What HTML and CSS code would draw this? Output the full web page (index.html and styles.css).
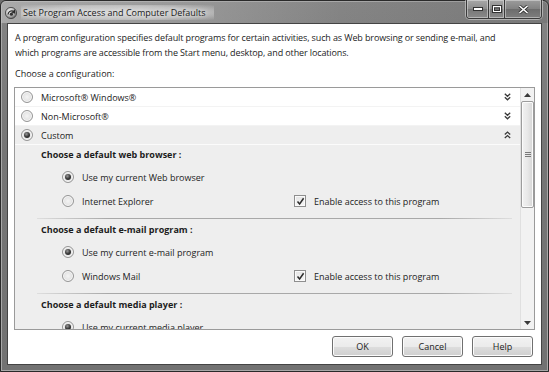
FILE: index.html
```html
<!DOCTYPE html>
<html>
<head>
<meta charset="utf-8">
<link rel="stylesheet" href="styles.css">
</head>
<body>
<div class="window">
  <div class="titlebar">
    <svg class="appicon" width="12" height="12" viewBox="0 0 12 12">
      <defs>
        <radialGradient id="ig" cx="0.4" cy="0.35" r="0.7">
          <stop offset="0" stop-color="#f4f4f4"/>
          <stop offset="0.6" stop-color="#b4b4b4"/>
          <stop offset="1" stop-color="#5a5a5a"/>
        </radialGradient>
      </defs>
      <circle cx="6" cy="6" r="5.6" fill="url(#ig)" stroke="#3c3c3c" stroke-width="0.8"/>
      <path d="M3 7.5 C3.5 4.5 6 3.2 8.8 4.2 L7.6 5.2 L9.6 5.8 L9.4 3.6 L8.9 4.1" fill="none" stroke="#2a2a2a" stroke-width="1.2"/>
      <circle cx="6.4" cy="7.2" r="1.6" fill="#333"/>
    </svg>
    <span class="title">Set Program Access and Computer Defaults</span>
    <div class="caption">
      <div class="cbtn cmin"><svg width="10" height="4" viewBox="0 0 10 4"><rect x="0.5" y="0.5" width="9" height="3" fill="#fff" stroke="#333"/></svg></div>
      <div class="cbtn cmax"><svg width="10" height="8" viewBox="0 0 10 8"><rect x="0.5" y="0.5" width="9" height="7" fill="none" stroke="#333"/><rect x="1.5" y="1.5" width="7" height="5" fill="none" stroke="#fff"/><rect x="2.5" y="3" width="5" height="2.5" fill="none" stroke="#333"/></svg></div>
      <div class="cbtn cclose"><svg width="11" height="9" viewBox="0 0 11 9"><path d="M1.5 1 L9.5 8 M9.5 1 L1.5 8" stroke="#333" stroke-width="3.2"/><path d="M1.5 1 L9.5 8 M9.5 1 L1.5 8" stroke="#fff" stroke-width="1.6"/></svg></div>
    </div>
  </div>
  <div class="client">
    <p class="intro">A program configuration specifies default programs for certain activities, such as Web browsing or sending e-mail, and<br>which programs are accessible from the Start menu, desktop, and other locations.</p>
    <p class="choose">Choose a configuration:</p>
    <div class="listbox">
      <div class="listcontent">
        <div class="row">
          <span class="radio"></span><span class="rlabel">Microsoft® Windows®</span>
          <svg class="chev" width="7" height="8" viewBox="0 0 7 8"><path d="M0.8 0.8 L3.5 3.3 L6.2 0.8 M0.8 4.3 L3.5 6.8 L6.2 4.3" fill="none" stroke="#3a3a3a" stroke-width="1.3"/></svg>
        </div>
        <div class="row">
          <span class="radio"></span><span class="rlabel">Non-Microsoft®</span>
          <svg class="chev" width="7" height="8" viewBox="0 0 7 8"><path d="M0.8 0.8 L3.5 3.3 L6.2 0.8 M0.8 4.3 L3.5 6.8 L6.2 4.3" fill="none" stroke="#3a3a3a" stroke-width="1.3"/></svg>
        </div>
        <div class="row selected">
          <span class="radio on"></span><span class="rlabel">Custom</span>
          <svg class="chev" width="7" height="8" viewBox="0 0 7 8"><path d="M0.8 3.6 L3.5 1.1 L6.2 3.6 M0.8 7.1 L3.5 4.6 L6.2 7.1" fill="none" stroke="#3a3a3a" stroke-width="1.3"/></svg>
        </div>
        <div class="details">
          <div class="ghead">Choose a default web browser :</div>
          <div class="opt"><span class="radio on"></span><span class="olabel">Use my current Web browser</span></div>
          <div class="opt"><span class="radio"></span><span class="olabel">Internet Explorer</span><span class="check"><svg width="9" height="9" viewBox="0 0 9 9"><path d="M1.5 4.5 L3.6 7 L7.6 1.2" fill="none" stroke="#2c2c2c" stroke-width="1.5"/></svg></span><span class="clabel">Enable access to this program</span></div>
          <div class="sep"></div>
          <div class="ghead">Choose a default e-mail program :</div>
          <div class="opt"><span class="radio on"></span><span class="olabel">Use my current e-mail program</span></div>
          <div class="opt"><span class="radio"></span><span class="olabel">Windows Mail</span><span class="check"><svg width="9" height="9" viewBox="0 0 9 9"><path d="M1.5 4.5 L3.6 7 L7.6 1.2" fill="none" stroke="#2c2c2c" stroke-width="1.5"/></svg></span><span class="clabel">Enable access to this program</span></div>
          <div class="sep"></div>
          <div class="ghead">Choose a default media player :</div>
          <div class="opt"><span class="radio on"></span><span class="olabel">Use my current media player</span></div>
        </div>
      </div>
      <div class="scrollbar">
        <div class="sbarrow"><svg width="7" height="4" viewBox="0 0 7 4"><path d="M0 4 L3.5 0 L7 4 Z" fill="#3a3a3a"/></svg></div>
        <div class="thumb"><span class="grip"></span><span class="grip"></span><span class="grip"></span></div>
        <div class="sbtrack"></div>
        <div class="sbarrow"><svg width="7" height="4" viewBox="0 0 7 4"><path d="M0 0 L3.5 4 L7 0 Z" fill="#3a3a3a"/></svg></div>
      </div>
    </div>
    <div class="buttons">
      <button class="btn">OK</button>
      <button class="btn">Cancel</button>
      <button class="btn">Help</button>
    </div>
  </div>
</div>
</body>
</html>
```

FILE: styles.css
```css
* { box-sizing: border-box; }
html, body {
  margin: 0;
  padding: 0;
  width: 549px;
  height: 372px;
  overflow: hidden;
  background: #6e6e6e;
}
body {
  font-family: "Open Sans", "Noto Sans", sans-serif;
  font-size: 9px;
  color: #1c1c1c;
}
.window {
  width: 549px;
  height: 372px;
  border: 1px solid #2a2a2a;
  border-radius: 6px 6px 0 0;
  background: linear-gradient(180deg, #858585 0%, #767676 40%, #727272 100%);
  padding: 0 6px 6px 6px;
  display: flex;
  flex-direction: column;
  box-shadow: inset 0 0 0 1px #a8a8a8;
}
.titlebar {
  height: 22px;
  display: flex;
  align-items: center;
  position: relative;
  margin: 0 -6px;
  padding-left: 4px;
  background: linear-gradient(90deg, rgba(200,200,200,0.55) 0%, rgba(175,175,175,0.4) 38%, rgba(120,120,120,0) 62%, rgba(80,80,80,0.2) 100%);
  border-radius: 5px 5px 0 0;
}
.appicon { flex: none; margin-top: 1px; }
.title {
  margin-left: 4px;
  font-size: 9px;
  color: #1a1a1a;
  padding: 1px 8px 1px 2px;
  background: radial-gradient(ellipse at center, rgba(230,230,230,0.8) 0%, rgba(220,220,220,0.6) 60%, rgba(200,200,200,0) 100%);
  text-shadow: 0 0 4px #fff;
}
.caption {
  position: absolute;
  top: -1px;
  right: 6px;
  display: flex;
  height: 19px;
  border: 1px solid #3a3a3a;
  border-top: none;
  border-radius: 0 0 4px 4px;
  overflow: hidden;
  box-shadow: 0 0 0 1px rgba(220,220,220,0.55);
}
.cbtn {
  height: 18px;
  display: flex;
  align-items: center;
  justify-content: center;
  background: linear-gradient(180deg, #a8a8a8 0%, #8c8c8c 50%, #777 51%, #8a8a8a 100%);
  box-shadow: inset 0 0 0 1px rgba(230,230,230,0.5);
}
.cmin { width: 22px; border-right: 1px solid #3a3a3a; }
.cmax { width: 16px; border-right: 1px solid #3a3a3a; }
.cclose { width: 36px; background: linear-gradient(180deg, #9c9c9c 0%, #828282 50%, #6c6c6c 51%, #7e7e7e 100%); }
.client {
  flex: 1;
  background: #fff;
  border: 1px solid #444;
  padding: 6px 6px 0 6px;
  display: flex;
  flex-direction: column;
}
.intro, .choose {
  margin: 0 0 0 1px;
  line-height: 15px;
}
.intro { letter-spacing: -0.12px; }
.choose { margin-top: 6px; }
.listbox {
  margin-top: 6px;
  height: 243px;
  border: 1px solid #9a9a9a;
  display: flex;
  overflow: hidden;
}
.listcontent {
  flex: 1;
  overflow: hidden;
}
.row {
  height: 19px;
  display: flex;
  align-items: center;
  padding-left: 6px;
  padding-right: 9px;
  border-bottom: 1px solid #f3f3f3;
}
.row.selected {
  background: #eeeeee;
  border-bottom: 1px solid #fbfbfb;
}
.rlabel { margin-left: 8px; flex: 1; }
.chev { flex: none; }
.radio {
  flex: none;
  width: 12px;
  height: 12px;
  border-radius: 50%;
  border: 1px solid #969696;
  background: radial-gradient(circle at 50% 50%, #f4f4f4 0%, #e4e4e4 55%, #d2d2d2 100%);
  box-shadow: inset 0 0 0 1px #f8f8f8;
  position: relative;
}
.radio.on::after {
  content: "";
  position: absolute;
  left: 2px;
  top: 2px;
  width: 6px;
  height: 6px;
  border-radius: 50%;
  background: radial-gradient(circle at 40% 35%, #9a9a9a 0%, #3a3a3a 50%, #151515 100%);
}
.details {
  background: #eeeeee;
  padding-bottom: 20px;
}
.ghead {
  height: 20px;
  line-height: 20px;
  padding-left: 26px;
  font-weight: bold;
}
.opt {
  height: 24px;
  display: flex;
  align-items: center;
  padding-left: 47px;
}
.olabel { margin-left: 8px; width: 212px; flex: none; }
.check {
  flex: none;
  width: 12px;
  height: 12px;
  border: 1px solid #8e8e8e;
  background: linear-gradient(180deg, #e4e4e4, #f6f6f6);
  box-shadow: inset 0 0 0 1px #fafafa;
  display: flex;
  align-items: center;
  justify-content: center;
}
.clabel { margin-left: 8px; }
.sep {
  height: 1px;
  margin: 5px 8px 1px 22px;
  background: linear-gradient(90deg, rgba(160,160,160,0.2) 0%, #a8a8a8 15%, #a8a8a8 85%, rgba(160,160,160,0.2) 100%);
}
.scrollbar {
  width: 14px;
  flex: none;
  display: flex;
  flex-direction: column;
  background: #f2f2f2;
  border-left: 1px solid #e0e0e0;
}
.sbarrow {
  height: 13px;
  flex: none;
  display: flex;
  align-items: center;
  justify-content: center;
}
.thumb {
  height: 107px;
  flex: none;
  border: 1px solid #9c9c9c;
  border-radius: 2px;
  background: linear-gradient(90deg, #f2f2f2 0%, #e8e8e8 50%, #d6d6d6 100%);
  box-shadow: inset 0 0 0 1px #fbfbfb;
  display: flex;
  flex-direction: column;
  align-items: center;
  justify-content: center;
  gap: 1px;
}
.grip {
  width: 6px;
  height: 1px;
  background: #7a7a7a;
}
.sbtrack { flex: 1; }
.buttons {
  display: flex;
  justify-content: flex-end;
  gap: 9px;
  margin-top: 6px;
  padding-right: 2px;
}
.btn {
  width: 61px;
  height: 21px;
  font-family: "Open Sans", "Noto Sans", sans-serif;
  font-size: 9px;
  color: #1c1c1c;
  border: 1px solid #707070;
  border-radius: 3px;
  background: linear-gradient(180deg, #f2f2f2 0%, #ebebeb 50%, #dddddd 51%, #cfcfcf 100%);
  box-shadow: inset 0 0 0 1px #fcfcfc;
  padding: 0;
}
```
